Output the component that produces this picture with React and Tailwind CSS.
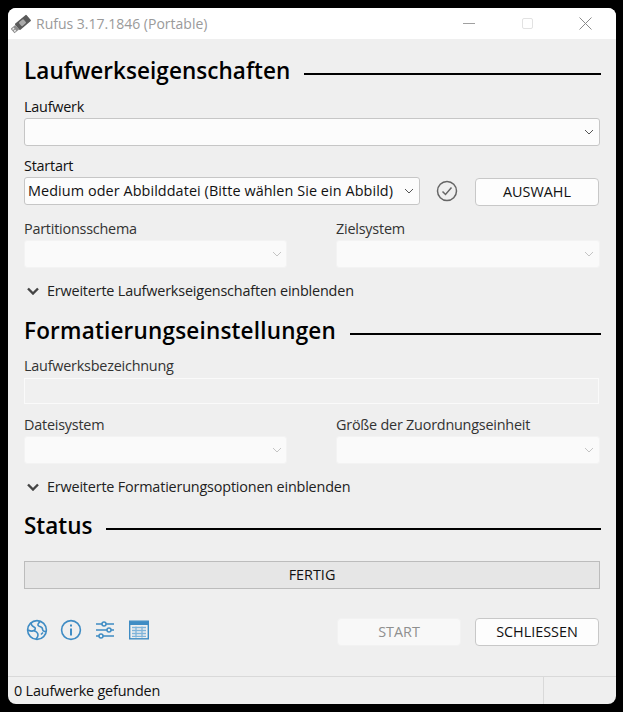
const font = { fontFamily: '"Open Sans", "Noto Sans", sans-serif' }

const Chevron = ({ muted }) => (
    <svg width="10" height="10" viewBox="0 0 10 10" fill="none" stroke={muted ? '#c4c4c4' : '#555555'} strokeWidth="1">
        <path d="M1 3l4 4 4-4" />
    </svg>
)

const Select = ({ text, disabled, tight, className }) => (
    <div className={`flex h-[28px] items-center justify-between rounded-[3px] border pl-[3px] ${tight ? 'pr-[4px]' : 'pr-[5px]'} ${disabled ? 'border-[#f3f3f3] bg-[#fafafa]' : 'border-[#c6c6c6] bg-[#fcfcfc]'} ${className}`}>
        <span className="whitespace-nowrap text-[14.4px] tracking-[0.08px] text-[#111]">{text}</span>
        <Chevron muted={disabled} />
    </div>
)

const Label = ({ children, muted }) => (
    <div className={`h-5 text-[14.4px] leading-5 tracking-[-0.22px] ${muted ? 'text-[#333]' : 'text-[#111]'}`}>{children}</div>
)

const Heading = ({ children, className, textClass }) => (
    <div className={`flex h-7 items-center gap-[14px] ${className}`}>
        <span className={`whitespace-nowrap text-[22.5px] font-semibold leading-7 text-black ${textClass}`}>{children}</span>
        <div className="mr-[-1px] mt-[6px] h-[2px] flex-1 bg-black" />
    </div>
)

const Expand = ({ children, className }) => (
    <div className={`flex h-5 items-center gap-[8px] pl-[3px] text-[14.4px] tracking-[-0.18px] text-[#222] ${className}`}>
        <svg width="12" height="8" viewBox="0 0 12 8" fill="none" stroke="#444" strokeWidth="2.4">
            <path d="M1 1.500l5 5 5-5" />
        </svg>
        {children}
    </div>
)

const Button = ({ children, disabled }) => (
    <div className={`flex h-[28px] w-[124px] items-center justify-center rounded-[4px] border text-[14.4px] ${disabled ? 'border-[#f2f2f2] bg-[#f8f8f8] text-[#8f8f8f]' : 'border-[#c8c8c8] bg-[#fdfdfd] text-[#111]'}`}>
        {children}
    </div>
)

const TwoCols = ({ left, right, className }) => (
    <div className={`flex gap-[49px] ${className}`}>
        <div className="w-[263px]">
            <Label muted>{left}</Label>
            <Select disabled tight className="mt-px" />
        </div>
        <div className="w-[264px]">
            <Label muted>{right}</Label>
            <Select disabled className="mt-px" />
        </div>
    </div>
)

const UsbIcon = () => (
    <svg width="20" height="20" viewBox="0 0 20 20">
        <g transform="rotate(-40 10 10)">
            <rect x="5" y="6" width="15" height="8" rx="1" fill="#5a5a5a" />
            <rect x="9" y="7.500" width="6" height="5" rx="1" fill="#a9a9a9" />
            <rect x="-1" y="7" width="6" height="6" fill="#8d8d8d" />
            <rect x="0" y="8" width="2" height="1.500" fill="#eee" />
            <rect x="0" y="10.500" width="2" height="1.500" fill="#eee" />
        </g>
    </svg>
)

const blue = '#3f8cc4'

const GlobeIcon = () => (
    <svg width="22" height="22" viewBox="0 0 22 22" fill="none" stroke={blue} strokeWidth="1.6">
        <circle cx="11" cy="11" r="9.400" />
        <path d="M5 3.500c0 3 1 3.500 3 4.500s1.500 2.500 0 3.500-4 .5-6-.5M8 12c2 0 4 2 4 4s-1 3-2 4.300M14 2.300c-1 2-2.500 2.500-2 4s3 1 4 2.500 0 3 2 3.500 2.500-.5 2.500-.5M15 15.500l2-2" />
    </svg>
)

const InfoIcon = () => (
    <svg width="22" height="22" viewBox="0 0 22 22" fill="none" stroke={blue} strokeWidth="1.6">
        <circle cx="11" cy="11" r="9.400" />
        <path d="M11 9.500v7" strokeWidth="2" />
        <path d="M11 5.500v2" strokeWidth="2" />
    </svg>
)

const SlidersIcon = () => (
    <svg width="20" height="20" viewBox="0 0 20 20" fill="none" stroke={blue} strokeWidth="1.5">
        <path d="M1 4h6M11 4h8M1 10h11M16 10h3M1 16h3M8 16h11" />
        <circle cx="9" cy="4" r="2" />
        <circle cx="14" cy="10" r="2" />
        <circle cx="6" cy="16" r="2" />
    </svg>
)

const TableIcon = () => (
    <svg width="20" height="20" viewBox="0 0 20 20" fill="none">
        <rect x="0.700" y="1.200" width="18.600" height="17.600" stroke={blue} strokeWidth="1.400" />
        <rect x="1" y="1.500" width="18" height="3.500" fill={blue} />
        <path d="M3 7.500h14M3 10.500h14M3 13.500h14M3 16.300h14M7 6.500v11M13 6.500v11" stroke="#7fb4da" strokeWidth="1.300" />
    </svg>
)

const App = () => {
    return (
        <div className="h-[712px] w-[623px] overflow-hidden bg-black p-2" style={font}>
            <div className="flex h-[696px] w-[608px] flex-col overflow-hidden rounded-lg bg-[#efefef]">
                <div className="flex h-[31px] items-center bg-white pl-[3px]">
                    <UsbIcon />
                    <span className="ml-[5px] text-[14px] text-[#9a9a9a]">Rufus 3.17.1846 (Portable)</span>
                    <div className="ml-auto flex items-center">
                        <div className="flex w-[46px] justify-center"><div className="h-px w-3 bg-[#a0a0a0]" /></div>
                        <div className="ml-[12px] flex w-[46px] justify-center"><div className="h-[11px] w-[11px] rounded-[2px] border border-[#e2e2e2]" /></div>
                        <div className="ml-[12px] mr-[8px] flex w-[46px] justify-center">
                            <svg width="13" height="13" viewBox="0 0 13 13" stroke="#8a8a8a" strokeWidth="1"><path d="M.5.500l12 12M12.500.500l-12 12" /></svg>
                        </div>
                    </div>
                </div>
                <div className="flex flex-1 flex-col px-4">
                    <Heading className="mt-[18px]" textClass="tracking-[0.05px]">Laufwerkseigenschaften</Heading>
                    <div className="mt-3">
                        <Label>Laufwerk</Label>
                        <Select className="mt-px" />
                    </div>
                    <div className="mt-[10px]">
                        <Label>Startart</Label>
                        <div className="mt-px flex items-start">
                            <Select className="w-[396px]" text="Medium oder Abbilddatei (Bitte wählen Sie ein Abbild)" />
                            <svg className="ml-[16px] mt-[3px]" width="22" height="22" viewBox="0 0 22 22" fill="none" stroke="#666" strokeWidth="1.500">
                                <circle cx="11" cy="11" r="9.500" />
                                <path d="M6.500 11.500l3 3 6-7" />
                            </svg>
                            <div className="ml-[17px] mt-px"><Button>AUSWAHL</Button></div>
                        </div>
                    </div>
                    <TwoCols className="mt-[13px]" left="Partitionsschema" right="Zielsystem" />
                    <Expand className="mt-[13px]">Erweiterte Laufwerkseigenschaften einblenden</Expand>
                    <Heading className="mt-4" textClass="tracking-[0.19px]">Formatierungseinstellungen</Heading>
                    <div className="mt-[11px]">
                        <Label muted>Laufwerksbezeichnung</Label>
                        <div className="mt-[2px] h-[26px] w-[575px] border border-[#fafafa] bg-[#f0f0f0]" />
                    </div>
                    <TwoCols className="mt-[11px]" left="Dateisystem" right="Größe der Zuordnungseinheit" />
                    <Expand className="mt-[13px]">Erweiterte Formatierungsoptionen einblenden</Expand>
                    <Heading className="mt-[15px]">Status</Heading>
                    <div className="mt-[21px] flex h-[28px] items-center justify-center border border-[#bcbcbc] bg-[#e6e6e6] text-[14.4px] text-[#111]">FERTIG</div>
                    <div className="mt-[29px] flex h-[28px] items-center">
                        <div className="mb-1 flex w-[230px] items-center pl-[2px]">
                            <GlobeIcon />
                            <div className="ml-3"><InfoIcon /></div>
                            <div className="ml-[13px]"><SlidersIcon /></div>
                            <div className="ml-[14px]"><TableIcon /></div>
                        </div>
                        <div className="ml-auto flex gap-[14px] pr-px">
                            <Button disabled>START</Button>
                            <Button>SCHLIESSEN</Button>
                        </div>
                    </div>
                </div>
                <div className="flex h-[28px] border-t border-[#d9d9d9]">
                    <div className="flex flex-1 items-center pl-[6px] text-[14.4px] tracking-[-0.18px] text-[#111]">0 Laufwerke gefunden</div>
                    <div className="w-[73px] border-l border-[#d9d9d9]" />
                </div>
            </div>
        </div>
    );
};

export default App;
